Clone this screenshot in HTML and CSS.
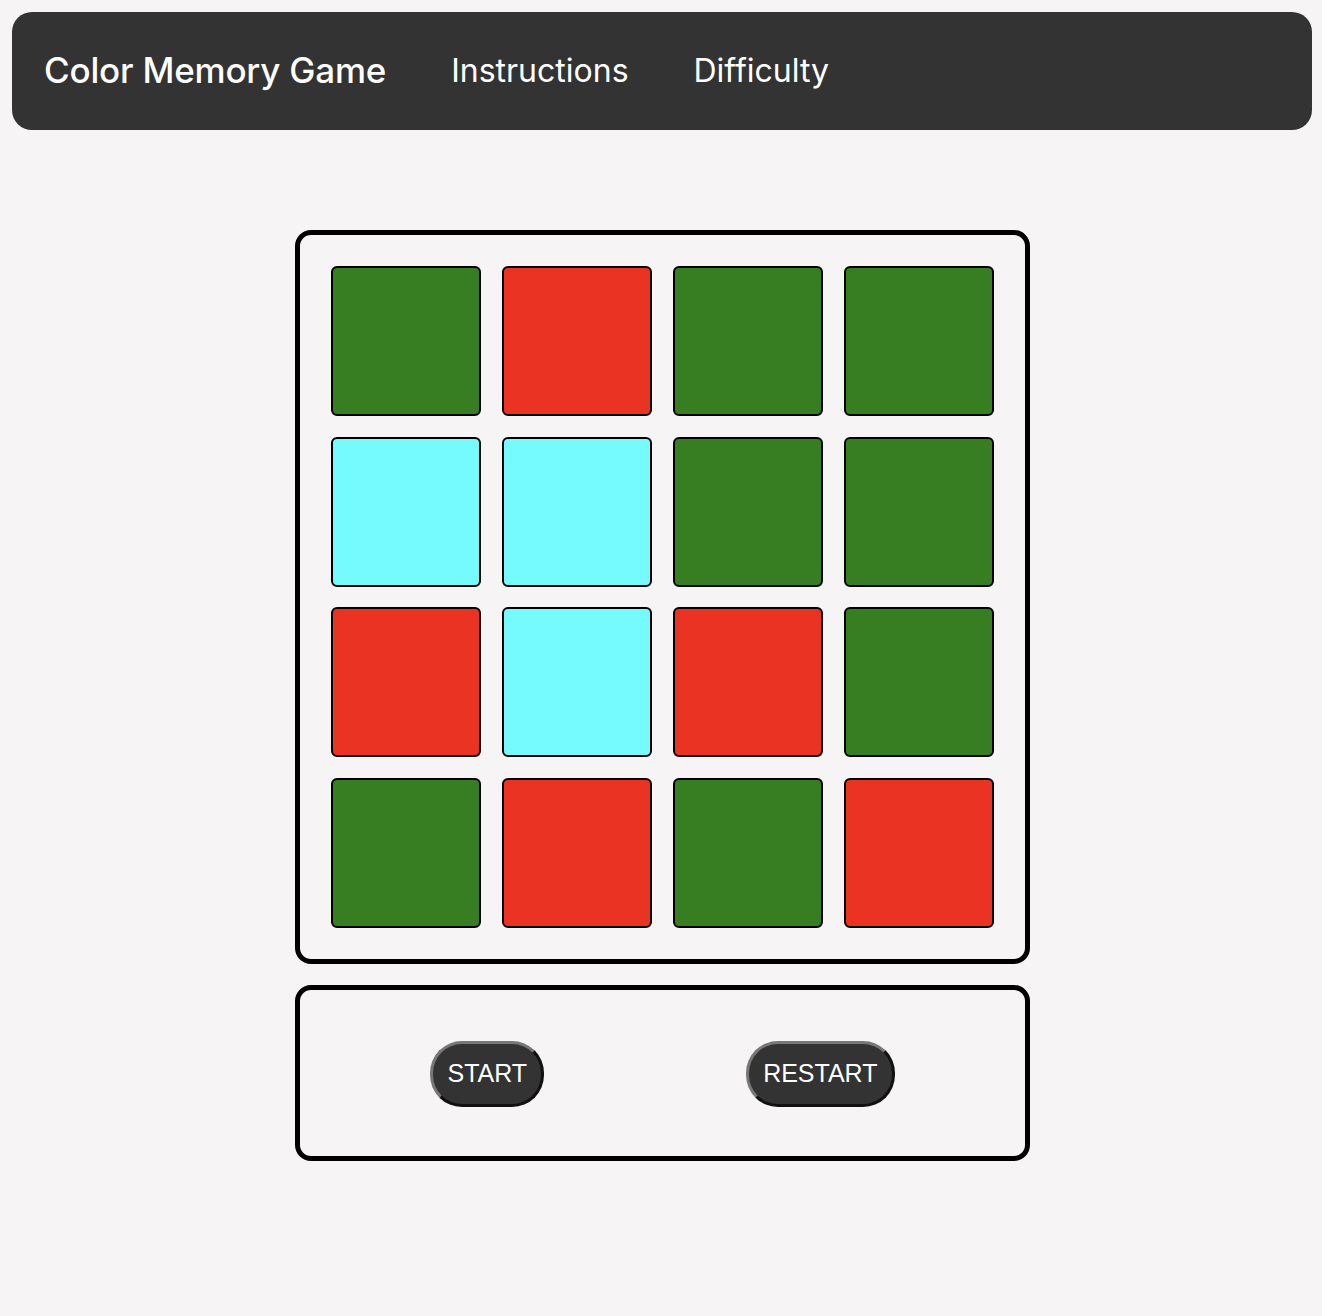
FILE: index.html
```html
<!DOCTYPE html>
<html lang="en">
<head>
<meta charset="utf-8">
<title>Color Memory Game</title>
<link rel="stylesheet" href="styles.css">
</head>
<body>
<nav class="nav">
  <span class="nav-title">Color Memory Game</span>
  <span class="nav-link">Instructions</span>
  <span class="nav-link">Difficulty</span>
</nav>
<main class="main">
  <section class="board">
    <div class="tile green"></div>
    <div class="tile red"></div>
    <div class="tile green"></div>
    <div class="tile green"></div>
    <div class="tile cyan"></div>
    <div class="tile cyan"></div>
    <div class="tile green"></div>
    <div class="tile green"></div>
    <div class="tile red"></div>
    <div class="tile cyan"></div>
    <div class="tile red"></div>
    <div class="tile green"></div>
    <div class="tile green"></div>
    <div class="tile red"></div>
    <div class="tile green"></div>
    <div class="tile red"></div>
  </section>
  <section class="controls">
    <button class="btn">START</button>
    <button class="btn">RESTART</button>
  </section>
</main>
</body>
</html>
```

FILE: styles.css
```css
* { box-sizing: border-box; }
html, body { margin: 0; padding: 0; }
body {
  background: #f6f4f5;
  font-family: Inter, "Noto Sans", sans-serif;
  padding: 12px 10px 12px 12px;
  min-height: 1316px;
}
.nav {
  background: #333333;
  border-radius: 20px;
  height: 118px;
  display: flex;
  align-items: center;
  padding-left: 32px;
  padding-bottom: 2px;
  color: #ffffff;
}
.nav-title {
  font-size: 35px;
  font-weight: 500;
  letter-spacing: -0.2px;
  margin-right: 65px;
}
.nav-link {
  font-size: 32px;
  font-weight: 400;
  margin-right: 65px;
}
.main {
  display: flex;
  flex-direction: column;
  align-items: center;
  padding-top: 100px;
  padding-left: 1px;
}
.board {
  width: 735px;
  border: 5px solid #000;
  border-radius: 16px;
  padding: 31px 31px 31px 31px;
  display: grid;
  grid-template-columns: repeat(4, 150px);
  grid-auto-rows: 150px;
  gap: 20.66px 21px;
}
.tile {
  border: 2px solid #000;
  border-radius: 6px;
}
.green { background: #377d22; }
.red { background: #ea3323; }
.cyan { background: #75fbfd; }
.controls {
  width: 735px;
  margin-top: 21px;
  border: 5px solid #000;
  border-radius: 16px;
  padding: 51px 0 49px;
  display: flex;
  justify-content: center;
  gap: 202px;
}
.btn {
  background: #333333;
  color: #ffffff;
  font-family: "Liberation Sans", Arial, sans-serif;
  font-size: 25px;
  height: 66px;
  padding: 0 14px;
  border: 3px solid #777;
  border-right-color: #111;
  border-bottom-color: #111;
  border-radius: 32px;
}
```
